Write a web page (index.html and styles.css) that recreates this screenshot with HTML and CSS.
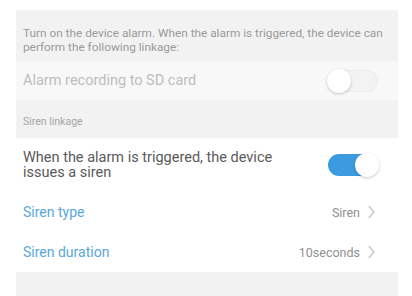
FILE: index.html
```html
<!DOCTYPE html>
<html lang="en">

<head>
   <meta charset="UTF-8">
   <meta name="viewport" content="width=device-width, initial-scale=1.0">
   <title>Alarm linkage</title>
   <link rel="stylesheet" href="styles.css">
</head>

<body>
   <div class="settings">
      <div class="note">Turn on the device alarm. When the alarm is triggered, the device can perform the following linkage:</div>

      <div class="row row-disabled">
         <span class="row-label">Alarm recording to SD card</span>
         <span class="switch"></span>
      </div>

      <div class="section-title">Siren linkage</div>

      <div class="row row-tall">
         <span class="row-label">When the alarm is triggered, the device issues a siren</span>
         <span class="switch on"></span>
      </div>

      <div class="row row-link">
         <span class="row-label">Siren type</span>
         <span class="row-value">Siren
            <svg width="9" height="14" viewBox="0 0 9 14" fill="none" stroke="currentColor" stroke-width="1.2" stroke-linecap="round" stroke-linejoin="round">
               <path d="M2 1.5l5 5.5-5 5.5"/>
            </svg>
         </span>
      </div>

      <div class="row row-link">
         <span class="row-label">Siren duration</span>
         <span class="row-value">10seconds
            <svg width="9" height="14" viewBox="0 0 9 14" fill="none" stroke="currentColor" stroke-width="1.2" stroke-linecap="round" stroke-linejoin="round">
               <path d="M2 1.5l5 5.5-5 5.5"/>
            </svg>
         </span>
      </div>

      <div class="footer-band"></div>
   </div>
</body>

</html>
```

FILE: styles.css
```css
body {
   margin: 0;
   background-color: white;
   font-family: Roboto, "Noto Sans", Arial, sans-serif;
}

.settings {
   display: flex;
   flex-direction: column;
   padding: 10px 14px 0 16px;
   height: 286px;
   overflow: hidden;
}

.note {
   background-color: #f2f2f2;
   color: #9a9a9a;
   font-size: 11.8px;
   line-height: 14px;
   padding: 16px 4px 7px 7px;
}

.row {
   display: flex;
   align-items: center;
   justify-content: space-between;
   padding: 0 20px 0 7px;
   background-color: white;
}

.row-label {
   font-size: 14.5px;
   color: #5a5a5a;
}

.row-disabled {
   background-color: #f8f8f8;
   height: 39px;
}

.row-disabled .row-label {
   color: #bdbdbd;
}

.section-title {
   background-color: #f2f2f2;
   color: #a5a5a5;
   font-size: 10.5px;
   height: 38px;
   display: flex;
   align-items: center;
   padding: 4px 7px 0;
   box-sizing: border-box;
}

.row-tall {
   height: 54px;
}

.row-tall .row-label {
   width: 270px;
   line-height: 15px;
}

.row-link {
   height: 40px;
}

.row-link .row-label {
   color: #5aa7dc;
   font-size: 14px;
}

.row-value {
   display: flex;
   align-items: center;
   gap: 7px;
   font-size: 12.5px;
   color: #909090;
   margin-right: 2px;
}

.row-value svg {
   color: #c4c4c4;
}

.switch {
   position: relative;
   width: 50px;
   height: 22px;
   border-radius: 11px;
   background-color: #f3f3f3;
   box-shadow: inset 0 0 0 1px #ebebeb;
}

.switch::after {
   content: "";
   position: absolute;
   top: -1px;
   left: -1px;
   width: 24px;
   height: 24px;
   border-radius: 50%;
   background-color: white;
   box-shadow: 0 1px 3px rgba(0, 0, 0, 0.22);
}

.switch.on {
   background-color: #3c9be0;
   box-shadow: none;
}

.switch.on::after {
   left: auto;
   right: -1px;
}

.footer-band {
   flex: 1;
   background-color: #f2f2f2;
}
```
